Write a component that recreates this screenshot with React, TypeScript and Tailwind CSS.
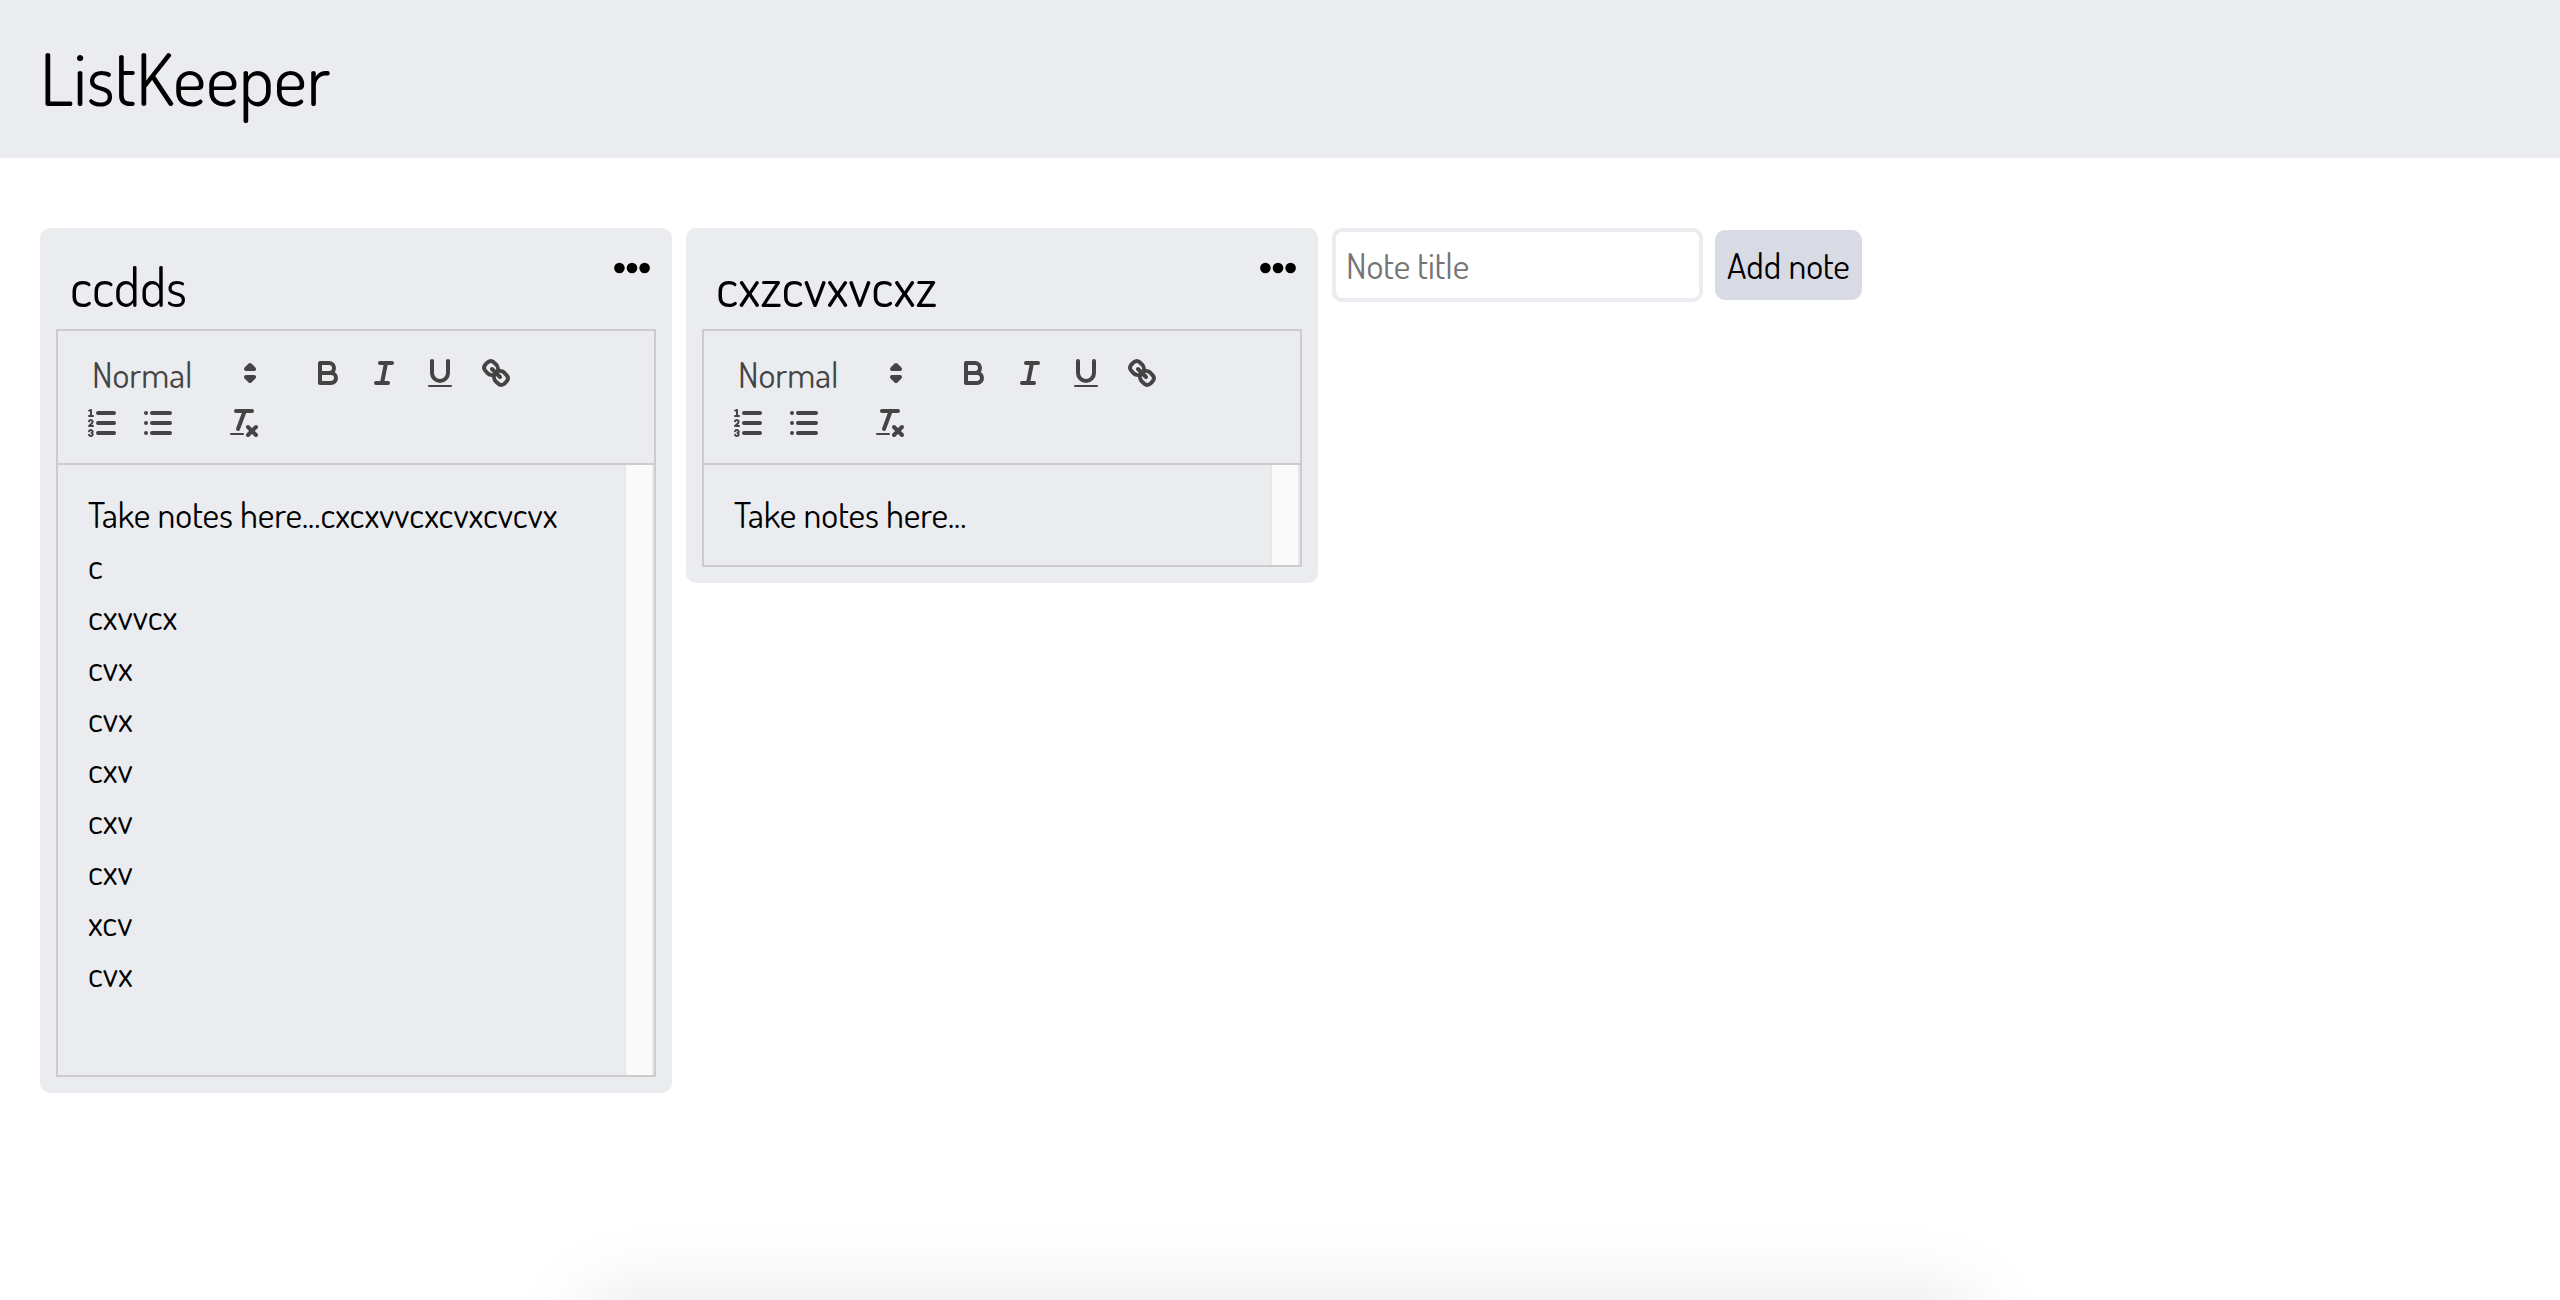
import React from "react";

type Note = { id: string; title: string; lines: string[] };

const notes: Note[] = [
  {
    id: "ccdds",
    title: "ccdds",
    lines: [
      "Take notes here...cxcxvvcxcvxcvcvx",
      "c",
      "cxvvcx",
      "cvx",
      "cvx",
      "cxv",
      "cxv",
      "cxv",
      "xcv",
      "cvx",
      "",
    ],
  },
  { id: "cxzcvxvcxz", title: "cxzcvxvcxz", lines: ["Take notes here..."] },
];

function Icon({ children }: { children: React.ReactNode }) {
  return (
    <svg
      viewBox="0 0 18 18"
      className="size-9"
      fill="none"
      stroke="#444"
      strokeWidth={2}
      strokeLinecap="round"
      strokeLinejoin="round"
      aria-hidden="true"
    >
      {children}
    </svg>
  );
}

const BoldIcon = () => (
  <Icon>
    <path d="M5,4H9.5A2.5,2.5,0,0,1,12,6.5v0A2.5,2.5,0,0,1,9.5,9H5V4Z" />
    <path d="M5,9h5.5A2.5,2.5,0,0,1,13,11.5v0A2.5,2.5,0,0,1,10.5,14H5V9Z" />
  </Icon>
);

const ItalicIcon = () => (
  <Icon>
    <line x1="7" x2="13" y1="4" y2="4" />
    <line x1="5" x2="11" y1="14" y2="14" />
    <line x1="8" x2="10" y1="14" y2="4" />
  </Icon>
);

const UnderlineIcon = () => (
  <Icon>
    <path d="M5,3V9a4.012,4.012,0,0,0,4,4H9a4.012,4.012,0,0,0,4-4V3" />
    <rect fill="#444" stroke="none" height="1" rx="0.5" ry="0.5" width="12" x="3" y="15" />
  </Icon>
);

const LinkIcon = () => (
  <Icon>
    <line x1="7" x2="11" y1="7" y2="11" />
    <path d="M8.9,4.577a3.476,3.476,0,0,1,.36,4.679A3.476,3.476,0,0,1,4.577,8.9C3.185,7.5,2.035,6.4,4.217,4.217S7.5,3.185,8.9,4.577Z" />
    <path d="M13.423,9.1a3.476,3.476,0,0,0-4.679-.36,3.476,3.476,0,0,0,.36,4.679c1.392,1.392,2.5,2.542,4.679.36S14.815,10.5,13.423,9.1Z" />
  </Icon>
);

const OrderedListIcon = () => (
  <Icon>
    <line x1="7" x2="15" y1="4" y2="4" />
    <line x1="7" x2="15" y1="9" y2="9" />
    <line x1="7" x2="15" y1="14" y2="14" />
    <line strokeWidth="1" x1="2.5" x2="4.5" y1="5.5" y2="5.5" />
    <path
      fill="#444"
      stroke="none"
      d="M3.5,6A0.5,0.5,0,0,1,3,5.5V3.085l-0.276.138A0.5,0.5,0,0,1,2.053,3c-0.124-.247-0.023-0.324.224-0.447l1-.5A0.5,0.5,0,0,1,4,2.5v3A0.5,0.5,0,0,1,3.5,6Z"
    />
    <path strokeWidth="1" d="M4.5,10.5h-2c0-.234,1.85-1.076,1.85-2.234A0.959,0.959,0,0,0,2.5,8.156" />
    <path
      strokeWidth="1"
      d="M2.5,14.846a0.959,0.959,0,0,0,1.85-.109A0.7,0.7,0,0,0,3.75,14a0.688,0.688,0,0,0,.6-0.736,0.959,0.959,0,0,0-1.85-.109"
    />
  </Icon>
);

const BulletListIcon = () => (
  <Icon>
    <line x1="6" x2="15" y1="4" y2="4" />
    <line x1="6" x2="15" y1="9" y2="9" />
    <line x1="6" x2="15" y1="14" y2="14" />
    <line x1="3" x2="3" y1="4" y2="4" />
    <line x1="3" x2="3" y1="9" y2="9" />
    <line x1="3" x2="3" y1="14" y2="14" />
  </Icon>
);

const CleanIcon = () => (
  <Icon>
    <line x1="5" x2="13" y1="3" y2="3" />
    <line x1="6" x2="9.35" y1="12" y2="3" />
    <line x1="11" x2="15" y1="11" y2="15" />
    <line x1="15" x2="11" y1="11" y2="15" />
    <rect fill="#444" stroke="none" height="1" rx="0.5" ry="0.5" width="7" x="2" y="14" />
  </Icon>
);

function ToolButton({ label, children }: { label: string; children: React.ReactNode }) {
  return (
    <button type="button" aria-label={label} className="h-12 w-14 px-[10px] py-[6px]">
      {children}
    </button>
  );
}

function Toolbar() {
  return (
    <div className="flex flex-wrap gap-y-[2px] border-2 border-[#ccc] px-4 pt-[18px] pb-4">
      <div className="relative mr-[30px] h-12 w-[196px]">
        <select
          aria-label="Text format"
          className="h-12 w-full appearance-none pt-[2px] pl-[18px] text-[36px] leading-[46px] text-[#444]"
        >
          <option>Normal</option>
        </select>
        <div className="pointer-events-none absolute top-[6px] right-[2px]">
          <Icon>
            <polygon points="7 11 9 13 11 11 7 11" />
            <polygon points="7 7 9 5 11 7 7 7" />
          </Icon>
        </div>
      </div>
      <div className="mr-[30px] flex">
        <ToolButton label="Bold"><BoldIcon /></ToolButton>
        <ToolButton label="Italic"><ItalicIcon /></ToolButton>
        <ToolButton label="Underline"><UnderlineIcon /></ToolButton>
        <ToolButton label="Link"><LinkIcon /></ToolButton>
      </div>
      <div className="mr-[30px] flex">
        <ToolButton label="Ordered list"><OrderedListIcon /></ToolButton>
        <ToolButton label="Bullet list"><BulletListIcon /></ToolButton>
      </div>
      <ToolButton label="Clear formatting"><CleanIcon /></ToolButton>
    </div>
  );
}

function NoteCard({ note }: { note: Note }) {
  return (
    <article className="w-[632px] rounded-[10px] bg-[#ebecf0] px-4 pb-4">
      <div className="flex h-[101px] items-start justify-between pr-[6px] pl-[14px]">
        <h2 className="pt-[26px] text-[54px] leading-[64px]">{note.title}</h2>
        <button type="button" aria-label={`Options for ${note.title}`} className="pt-[22px]">
          <svg viewBox="0 0 36 36" className="size-9" aria-hidden="true">
            <circle cx="5.4" cy="18" r="5.3" />
            <circle cx="18" cy="18" r="5.3" />
            <circle cx="30.6" cy="18" r="5.3" />
          </svg>
        </button>
      </div>
      <Toolbar />
      <div className="flex border-2 border-t-0 border-[#ccc]">
        <textarea
          aria-label={`Text of ${note.title}`}
          rows={note.lines.length}
          defaultValue={note.lines.join("\n")}
          className="mt-6 mb-[25px] block min-w-0 flex-1 resize-none overflow-hidden pl-[30px] text-[36px] leading-[51px] outline-none"
        />
        <div className="w-[30px] border-x-2 border-[#e8e8e8] bg-[#fafafa]" />
      </div>
    </article>
  );
}

export default function App() {
  return (
    <div className="relative min-h-screen overflow-hidden bg-white font-['Dosis','Lato',sans-serif] text-black">
      <header className="bg-[#ebecf0] px-10 pt-[30px] pb-8">
        <h1 className="text-[72px] leading-[96px]">ListKeeper</h1>
      </header>
      <main className="flex flex-wrap items-start gap-[14px] px-10 pt-[70px]">
        {notes.map((note) => (
          <NoteCard key={note.id} note={note} />
        ))}
        <form className="flex items-center gap-3" onSubmit={(e) => e.preventDefault()}>
          <input
            aria-label="Note title"
            placeholder="Note title"
            className="h-[74px] w-[371px] rounded-[10px] border-4 border-[#ebecf0] px-[10px] text-[36px] outline-none placeholder:text-[#757575]"
          />
          <button type="submit" className="h-[70px] rounded-[10px] bg-[#d8dbe3] px-3 text-[36px]">
            Add note
          </button>
        </form>
      </main>
      <div className="absolute top-full left-1/2 h-[400px] w-[54%] -translate-x-1/2 shadow-[0_0_80px_rgba(0,0,0,0.11)]" />
    </div>
  );
}
